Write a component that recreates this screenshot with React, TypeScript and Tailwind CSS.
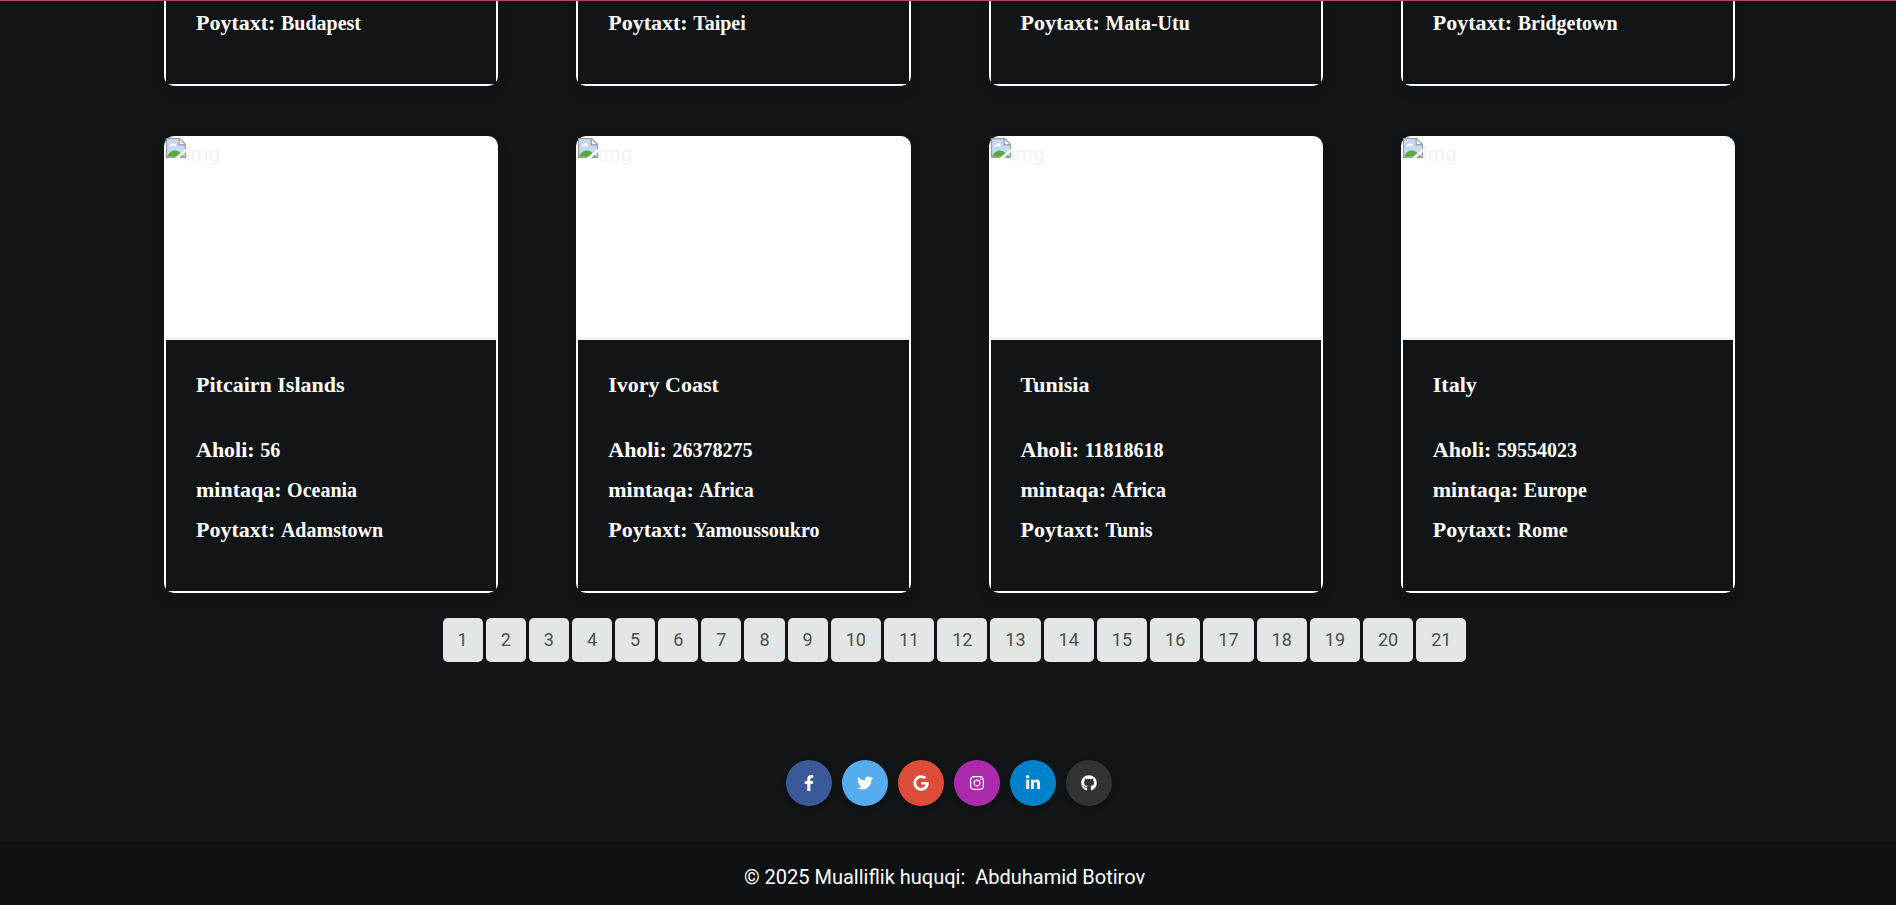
import type { IconType } from "react-icons";
import {
  FaFacebookF,
  FaGithub,
  FaGoogle,
  FaInstagram,
  FaLinkedinIn,
  FaTwitter,
} from "react-icons/fa";

interface Country {
  name: string;
  population: string;
  region: string;
  capital: string;
}

const previousCapitals = ["Budapest", "Taipei", "Mata-Utu", "Bridgetown"];

const countries: Country[] = [
  { name: "Pitcairn Islands", population: "56", region: "Oceania", capital: "Adamstown" },
  { name: "Ivory Coast", population: "26378275", region: "Africa", capital: "Yamoussoukro" },
  { name: "Tunisia", population: "11818618", region: "Africa", capital: "Tunis" },
  { name: "Italy", population: "59554023", region: "Europe", capital: "Rome" },
];

const pages = Array.from({ length: 21 }, (_, i) => i + 1);

const socials: { label: string; Icon: IconType; color: string }[] = [
  { label: "Facebook", Icon: FaFacebookF, color: "bg-[#3b5998]" },
  { label: "Twitter", Icon: FaTwitter, color: "bg-[#55acee]" },
  { label: "Google", Icon: FaGoogle, color: "bg-[#dd4b39]" },
  { label: "Instagram", Icon: FaInstagram, color: "bg-[#ac2bac]" },
  { label: "LinkedIn", Icon: FaLinkedinIn, color: "bg-[#0082ca]" },
  { label: "GitHub", Icon: FaGithub, color: "bg-[#333333]" },
];

function MissingImage() {
  return (
    <svg viewBox="0 0 16 16" className="size-5 shrink-0" aria-hidden="true">
      <path d="M1 1h10l4 4v10H1z" fill="#c5d8f7" />
      <path d="M3 6.5c0-1 .8-1.6 1.6-1.5C5 3.900 6.900 3.900 7.200 5c1 0 1.300 1.500.3 1.500z" fill="#fff" />
      <path d="M1 15c.8-3 3.500-5 6-5 2 0 3.600.9 5 2.500L15 15z" fill="#5aac38" />
      <path d="M11 1v4h4z" fill="#fff" />
      <path d="M15.500 9V5L11 .5H.5v15h15V11M10.500.5v5h5" fill="none" stroke="#9a9a9a" />
      <path d="M16 8.500 7 16h3.500L16 11z" fill="#fff" />
    </svg>
  );
}

function Detail({ label, value }: { label: string; value: string }) {
  return (
    <p className="text-[22px] leading-10">
      {label}: <span className="text-xl leading-none">{value}</span>
    </p>
  );
}

function CountryCard({ country }: { country: Country }) {
  return (
    <article className="rounded-[10px] border-2 border-white shadow-[0_5px_8px_rgba(24,18,18,0.25)]">
      <div className="flex h-[202px] rounded-t-md border-b-2 border-[#f0f3f0] bg-white font-['Roboto',sans-serif] text-xl text-[#f2f2f2]">
        <MissingImage />
        <span className="pt-0.5">img</span>
      </div>
      <div className="bg-[#111517] px-[30px] pt-[30px] pb-[41px] font-['Liberation_Serif',serif] font-bold text-white">
        <h2 className="mb-[30px] text-[22px] leading-[30px]">{country.name}</h2>
        <Detail label="Aholi" value={country.population} />
        <Detail label="mintaqa" value={country.region} />
        <Detail label="Poytaxt" value={country.capital} />
      </div>
    </article>
  );
}

export default function App() {
  return (
    <div className="min-h-screen bg-[#111517] font-['Roboto',sans-serif]">
      <div className="h-px bg-[#b0446e]" />
      <main className="pr-[161px] pl-[164px]">
        <div className="grid grid-cols-4 gap-x-[78px]">
          {previousCapitals.map((capital) => (
            <article
              key={capital}
              className="rounded-b-[10px] border-x-2 border-b-2 border-white shadow-[0_5px_8px_rgba(24,18,18,0.25)]"
            >
              <div className="bg-[#111517] px-[30px] pt-[2px] pb-[41px] font-['Liberation_Serif',serif] font-bold text-white">
                <Detail label="Poytaxt" value={capital} />
              </div>
            </article>
          ))}
        </div>
        <div className="mt-[50px] grid grid-cols-4 gap-x-[78px]">
          {countries.map((country) => (
            <CountryCard key={country.name} country={country} />
          ))}
        </div>
      </main>

      <nav aria-label="Sahifalar" className="mt-[25px] flex justify-center gap-[3px] pl-[13px]">
        {pages.map((page) => (
          <button
            key={page}
            type="button"
            className="h-11 rounded-[5px] bg-[#e2e6e4] px-[15px] text-lg text-[#4f4f4f]"
          >
            {page}
          </button>
        ))}
      </nav>

      <footer className="mt-[98px] text-white">
        <div className="flex justify-center gap-[10px] pb-[35px] pl-[2px]">
          {socials.map(({ label, Icon, color }) => (
            <a
              key={label}
              href="#"
              aria-label={label}
              className={`flex size-[46px] items-center justify-center rounded-full pb-px shadow-[0_2px_5px_rgba(0,0,0,0.2)] ${color}`}
            >
              <Icon className="size-4" />
            </a>
          ))}
        </div>
        <div className="bg-[#0d1112] pt-[22px] pr-[7px] pb-[14px] text-center text-xl leading-7">
          © 2025 Mualliflik huquqi:&nbsp;{" "}
          <a href="#">Abduhamid Botirov</a>
        </div>
      </footer>
    </div>
  );
}
